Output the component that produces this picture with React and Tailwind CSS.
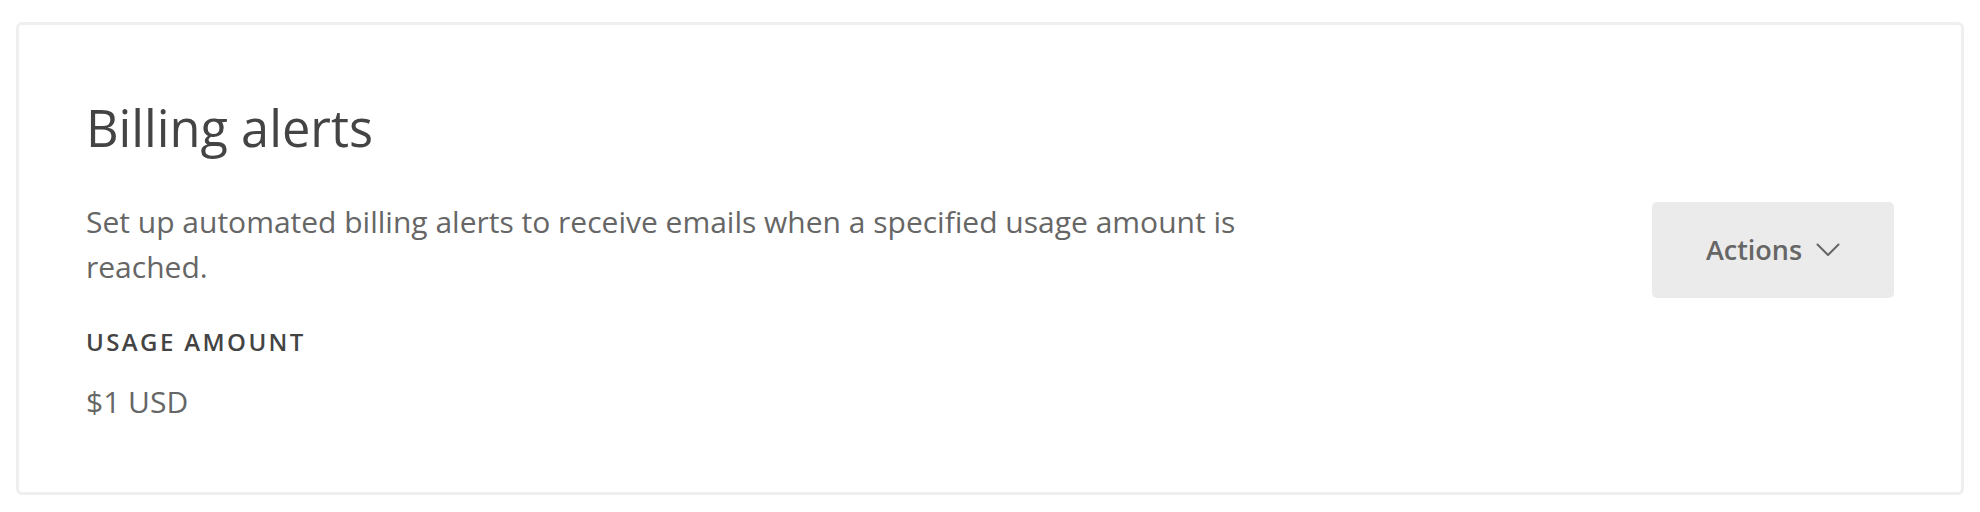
import React from "react";

export default function App() {
  return (
    <div className="min-h-[512px] bg-white px-4 pt-[22px] font-['Open_Sans','Lato',sans-serif]">
      <div className="rounded-md border-[3px] border-[#efefef] px-[67px] pt-[72px] pb-[68px]">
        <h2 className="text-[50.5px] leading-[62px] font-normal text-[#444444]">
          Billing alerts
        </h2>

        <div className="mt-[40px] flex items-start justify-between">
          <p className="max-w-[1180px] text-[30px] leading-[45px] text-[#666666]">
            Set up automated billing alerts to receive emails when a specified
            usage amount is reached.
          </p>
          <button className="mt-[3px] flex h-[96px] w-[242px] items-center justify-center gap-[14px] rounded-[5px] bg-[#ebebeb] text-[27px] font-semibold text-[#666666]">
            Actions
            <svg width="24" height="14" viewBox="0 0 24 14" fill="none">
              <polyline
                points="1.5,1.5 12,12 22.5,1.5"
                stroke="#666666"
                strokeWidth="2"
                strokeLinecap="round"
                strokeLinejoin="round"
              />
            </svg>
          </button>
        </div>

        <div className="mt-[28px] text-[24px] leading-[32px] font-semibold uppercase tracking-[0.1em] text-[#444444]">
          Usage amount
        </div>
        <div className="mt-[21px] text-[30px] leading-[45px] text-[#666666]">
          $1 USD
        </div>
      </div>
    </div>
  );
}
